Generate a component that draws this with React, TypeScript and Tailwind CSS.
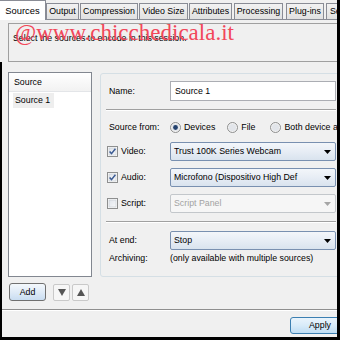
import React from "react";

type TabDef = { label: string; cls: string };

const tabs: TabDef[] = [
  { label: "Output", cls: "w-[33px] justify-center" },
  { label: "Compression", cls: "ml-[1px] w-[58px] justify-center" },
  { label: "Video Size", cls: "ml-[1px] w-[49px] justify-center" },
  { label: "Attributes", cls: "ml-[1px] w-[43px] justify-center" },
  { label: "Processing", cls: "ml-[2px] w-[49px] justify-center" },
  { label: "Plug-ins", cls: "ml-[3px] w-[38px] justify-center" },
  { label: "Settings", cls: "ml-[2px] w-[44px] pl-[3px]" },
];

function CheckBox({ checked }: { checked: boolean }) {
  return (
    <svg width="11" height="11" viewBox="0 0 11 11" className="shrink-0">
      <defs>
        <linearGradient id="cbfill" x1="0" y1="0" x2="1" y2="1">
          <stop offset="0" stopColor="#dfe3ea" />
          <stop offset="1" stopColor="#f7f8fa" />
        </linearGradient>
      </defs>
      <rect x="0.5" y="0.5" width="10" height="10" fill="#fbfbfb" stroke="#8e8f8f" />
      <rect x="2" y="2" width="7" height="7" fill="url(#cbfill)" stroke="#c4c9d1" strokeWidth="0.6" />
      {checked && (
        <path d="M2.6 5.4 L4.5 7.6 L8.4 2.8" fill="none" stroke="#3b5b93" strokeWidth="1.5" />
      )}
    </svg>
  );
}

function Radio({ checked }: { checked: boolean }) {
  return (
    <svg width="11" height="11" viewBox="0 0 11 11" className="shrink-0">
      <circle cx="5.5" cy="5.5" r="5" fill="#f3f3f3" stroke="#8e8f8f" />
      <circle cx="5.5" cy="5.5" r="3.6" fill="#e2e5ea" />
      {checked && <circle cx="5.5" cy="5.5" r="2.4" fill="#24426e" />}
    </svg>
  );
}

function Arrow({ color = "#000" }: { color?: string }) {
  return (
    <svg width="7" height="4" viewBox="0 0 7 4" className="shrink-0">
      <polygon points="0,0 7,0 3.5,4" fill={color} />
    </svg>
  );
}

function Combo({ value, disabled = false }: { value: string; disabled?: boolean }) {
  if (disabled) {
    return (
      <div className="flex-1 h-[19px] flex items-center justify-between pl-[3px] pr-[4px] border border-[#c3c7cb] rounded-[2px] bg-[#f6f6f6] text-[#a3a3a3]">
        <span>{value}</span>
        <Arrow color="#a6a6a6" />
      </div>
    );
  }
  return (
    <div className="flex-1 h-[19px] flex items-center justify-between pl-[3px] pr-[4px] border border-[#7990b0] rounded-[2px] bg-gradient-to-b from-[#f3f6fa] via-[#e7edf5] to-[#d9e3ee]">
      <span>{value}</span>
      <Arrow />
    </div>
  );
}

function Separator() {
  return <div className="-ml-[3px] h-[2px] border-t border-[#a0a0a0] border-b border-b-white" />;
}

export default function App() {
  return (
    <div className="w-[340px] h-[340px] bg-black overflow-hidden font-['Liberation_Sans',Arial,sans-serif] text-[8.8px] leading-[11px] text-black">
      <div className="relative w-[337px] h-[337px] bg-[#f0f0f0] overflow-hidden flex flex-col">
        {/* tab strip */}
        <div className="h-[20px] shrink-0 flex items-end border-b border-[#898c95]">
          <div className="relative z-10 -mb-px w-[46px] h-[20px] shrink-0 bg-white border-r border-t border-[#898c95] flex items-center justify-center pb-[1px] text-[9.4px]">
            Sources
          </div>
          {tabs.map((t) => (
            <div
              key={t.label}
              className={`h-[16px] shrink-0 flex items-center whitespace-nowrap border border-b-0 border-[#898c95] bg-gradient-to-b from-[#f2f2f2] to-[#e1e1e1] ${t.cls}`}
            >
              {t.label}
            </div>
          ))}
        </div>

        {/* header */}
        <div className="mt-[3px] ml-[8px] w-[340px] h-[39px] shrink-0 border border-[#a0a0a0] pl-[4px] pt-[9px]">
          Select the sources to encode in this session.
        </div>

        <div className="flex-1 flex flex-col border-l-2 border-black">
          <div className="mt-[10px] flex">
            {/* source list */}
            <div className="ml-[6px] w-[84px] h-[205px] shrink-0 bg-white border border-[#828790]">
              <div className="h-[19px] flex items-center pl-[5px] bg-gradient-to-b from-white to-[#f2f2f2] border-b border-[#e3e5e8]">
                Source
              </div>
              <div className="mt-[1px] ml-[4px] w-[41px] h-[15px] flex items-center pl-[2px] bg-[#eeeeee]">
                Source 1
              </div>
            </div>

            {/* details panel */}
            <div className="ml-[8px] mt-[1px] w-[240px] h-[204px] shrink-0 border border-[#d5dfe5] rounded-[3px] pl-[8px] pr-[3px] flex flex-col">
              <div className="mt-[7px] h-[20px] flex items-center">
                <span className="w-[61px] shrink-0">Name:</span>
                <div className="flex-1 h-[20px] flex items-center pl-[4px] bg-white border border-[#abadb3]">
                  Source 1
                </div>
              </div>

              <div className="mt-[8px]">
                <Separator />
              </div>

              <div className="mt-[10px] h-[13px] flex items-center whitespace-nowrap">
                <span className="w-[61px] shrink-0">Source from:</span>
                <Radio checked />
                <span className="ml-[3px]">Devices</span>
                <span className="ml-[12px]">
                  <Radio checked={false} />
                </span>
                <span className="ml-[3px]">File</span>
                <span className="ml-[15px]">
                  <Radio checked={false} />
                </span>
                <span className="ml-[3px]">Both device and file</span>
              </div>

              <div className="mt-[8px] h-[19px] flex items-center">
                <div className="-ml-[2px] w-[63px] shrink-0 flex items-center gap-[3px]">
                  <CheckBox checked />
                  <span>Video:</span>
                </div>
                <Combo value="Trust 100K Series Webcam" />
              </div>

              <div className="mt-[7px] h-[19px] flex items-center">
                <div className="-ml-[2px] w-[63px] shrink-0 flex items-center gap-[3px]">
                  <CheckBox checked />
                  <span>Audio:</span>
                </div>
                <Combo value="Microfono (Dispositivo High Def" />
              </div>

              <div className="mt-[7px] h-[19px] flex items-center">
                <div className="-ml-[2px] w-[63px] shrink-0 flex items-center gap-[3px]">
                  <CheckBox checked={false} />
                  <span>Script:</span>
                </div>
                <Combo value="Script Panel" disabled />
              </div>

              <div className="mt-[8px]">
                <Separator />
              </div>

              <div className="mt-[8px] h-[19px] flex items-center">
                <span className="w-[61px] shrink-0">At end:</span>
                <Combo value="Stop" />
              </div>

              <div className="mt-[2px] h-[12px] flex items-center whitespace-nowrap">
                <span className="w-[61px] shrink-0">Archiving:</span>
                <span>(only available with multiple sources)</span>
              </div>
            </div>
          </div>

          {/* list buttons */}
          <div className="mt-[6px] h-[18px] flex items-center">
            <div className="ml-[7px] w-[37px] h-[18px] flex items-center justify-center border border-[#707070] rounded-[3px] bg-gradient-to-b from-[#f4f8fc] via-[#e0ebf7] to-[#c9ddf1]">
              Add
            </div>
            <div className="ml-[7px] w-[17px] h-[17px] flex items-center justify-center border border-[#c9c9c9] rounded-[2px] bg-[#f6f6f6]">
              <svg width="8" height="7" viewBox="0 0 8 7">
                <polygon points="0,0 8,0 4,7" fill="#555" />
              </svg>
            </div>
            <div className="ml-[2px] w-[17px] h-[17px] flex items-center justify-center border border-[#c9c9c9] rounded-[2px] bg-[#f6f6f6]">
              <svg width="8" height="7" viewBox="0 0 8 7">
                <polygon points="0,7 8,7 4,0" fill="#555" />
              </svg>
            </div>
          </div>

          {/* footer */}
          <div className="mt-[8px] h-[2px] border-t border-[#8f8f8f] border-b border-b-white" />
          <div className="mt-[6px] ml-[288px] w-[60px] h-[17px] shrink-0 flex items-center justify-center border border-[#3c7fb1] rounded-[3px] bg-gradient-to-b from-[#eaf4fc] via-[#d8ebf9] to-[#bedcf3]">
            Apply
          </div>
        </div>

        {/* watermark */}
        <div className="pointer-events-none absolute left-[15px] top-[21px] z-20 whitespace-nowrap font-['Liberation_Serif',serif] text-[23px] leading-[23px] text-[#f2475a]">
          @www.chicchedicala.it
        </div>
      </div>
    </div>
  );
}
